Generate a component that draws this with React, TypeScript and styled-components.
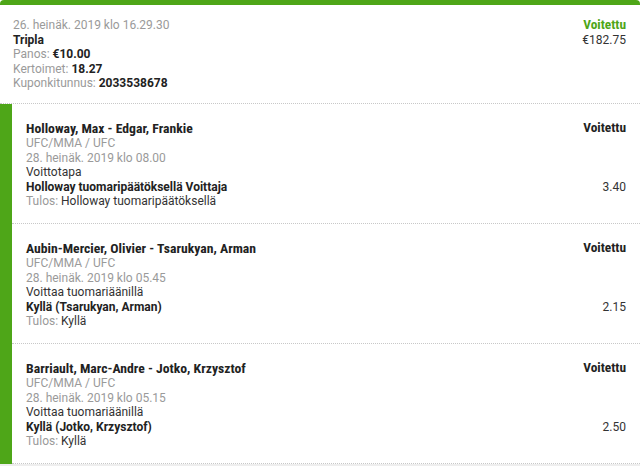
import styled, { createGlobalStyle } from "styled-components";

const GlobalStyle = createGlobalStyle`
  html, body {
    margin: 0;
    padding: 0;
    background: #fff;
  }
  body {
    font-family: Roboto, "Liberation Sans", Arial, sans-serif;
    font-size: 12px;
    color: #333;
  }
`;

const green = "#4ea618";

type Leg = {
  match: string;
  league: string;
  date: string;
  market: string;
  pick: string;
  result: string;
  odds: string;
};

const legs: Leg[] = [
  {
    match: "Holloway, Max - Edgar, Frankie",
    league: "UFC/MMA / UFC",
    date: "28. heinäk. 2019 klo 08.00",
    market: "Voittotapa",
    pick: "Holloway tuomaripäätöksellä Voittaja",
    result: "Holloway tuomaripäätöksellä",
    odds: "3.40",
  },
  {
    match: "Aubin-Mercier, Olivier - Tsarukyan, Arman",
    league: "UFC/MMA / UFC",
    date: "28. heinäk. 2019 klo 05.45",
    market: "Voittaa tuomariäänillä",
    pick: "Kyllä (Tsarukyan, Arman)",
    result: "Kyllä",
    odds: "2.15",
  },
  {
    match: "Barriault, Marc-Andre - Jotko, Krzysztof",
    league: "UFC/MMA / UFC",
    date: "28. heinäk. 2019 klo 05.15",
    market: "Voittaa tuomariäänillä",
    pick: "Kyllä (Jotko, Krzysztof)",
    result: "Kyllä",
    odds: "2.50",
  },
];

const Ticket = styled.div`
  border-top: 5px solid ${green};
  border-radius: 4px 4px 0 0;
  background: #fff;
`;

const Header = styled.div`
  display: flex;
  justify-content: space-between;
  padding: 13px 14px 13px 13px;
  height: 72px;
  border-bottom: 1px dotted #c8c8c8;
  line-height: 14.5px;
`;

const Col = styled.div<{ $right?: boolean }>`
  display: flex;
  flex-direction: column;
  align-items: ${({ $right }) => ($right ? "flex-end" : "flex-start")};
`;

const Muted = styled.span`
  color: #9a9a9a;
`;

const Strong = styled.span`
  font-weight: 700;
  color: #222;
`;

const Status = styled.span<{ $win?: boolean }>`
  font-family: "Roboto Condensed", "Liberation Sans Narrow", "DejaVu Sans Condensed", sans-serif;
  font-weight: 700;
  font-size: 13.4px;
  color: ${({ $win }) => ($win ? green : "#222")};
`;

const Legs = styled.div`
  border-left: 12px solid ${green};
`;

const LegRow = styled.div`
  display: flex;
  justify-content: space-between;
  padding: 16px 14px 0 14px;
  height: 103px;
  border-bottom: 1px dotted #c8c8c8;
  line-height: 14.5px;
`;

const Title = styled.div`
  font-family: "Roboto Condensed", "Liberation Sans Narrow", "DejaVu Sans Condensed", sans-serif;
  font-weight: 700;
  font-size: 13.7px;
  color: #222;
  line-height: 16px;
`;

const LegRight = styled.div`
  display: flex;
  flex-direction: column;
  align-items: flex-end;
  justify-content: space-between;
  height: 75px;
  line-height: 16px;
`;

const Odds = styled.span`
  color: #333;
`;

const Footer = styled.div`
  height: 4px;
  background: #eeeeee;
`;

export default function App() {
  return (
    <>
      <GlobalStyle />
      <Ticket>
        <Header>
          <Col>
            <Muted>26. heinäk. 2019 klo 16.29.30</Muted>
            <Strong>Tripla</Strong>
            <span>
              <Muted>Panos: </Muted>
              <Strong>€10.00</Strong>
            </span>
            <span>
              <Muted>Kertoimet: </Muted>
              <Strong>18.27</Strong>
            </span>
            <span>
              <Muted>Kuponkitunnus: </Muted>
              <Strong>2033538678</Strong>
            </span>
          </Col>
          <Col $right>
            <Status $win>Voitettu</Status>
            <span>€182.75</span>
          </Col>
        </Header>
        <Legs>
          {legs.map((leg) => (
            <LegRow key={leg.match}>
              <Col>
                <Title>{leg.match}</Title>
                <Muted>{leg.league}</Muted>
                <Muted>{leg.date}</Muted>
                <span>{leg.market}</span>
                <Strong>{leg.pick}</Strong>
                <span>
                  <Muted>Tulos: </Muted>
                  {leg.result}
                </span>
              </Col>
              <LegRight>
                <Status>Voitettu</Status>
                <Odds>{leg.odds}</Odds>
              </LegRight>
            </LegRow>
          ))}
        </Legs>
        <Footer />
      </Ticket>
    </>
  );
}
